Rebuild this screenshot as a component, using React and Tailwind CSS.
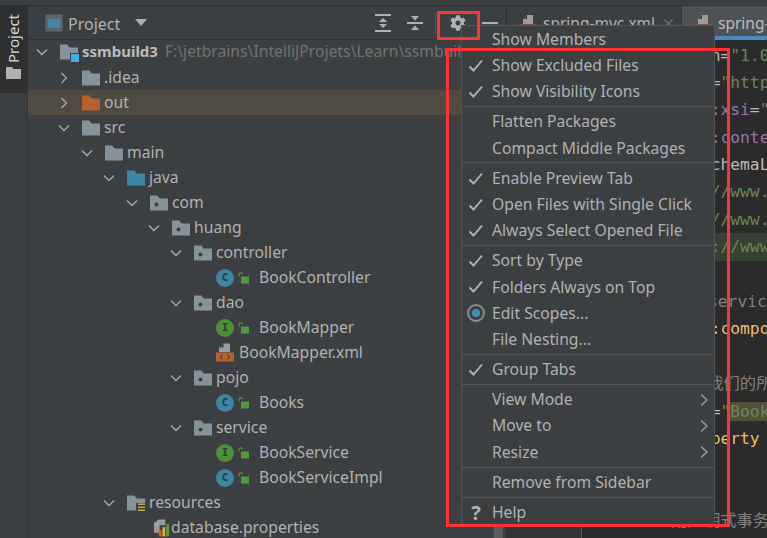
import React from "react";
import { FaCog } from "react-icons/fa";

const SANS = "font-['Noto_Sans','Open_Sans',sans-serif]";

const Chevron = ({ open, className = "" }) => (
  <svg width="16" height="16" viewBox="0 0 16 16" className={className} fill="none" stroke="#a9abad" strokeWidth="1.3">
    {open ? <path d="M3 5.5l5 5 5-5" /> : <path d="M5.5 3l5 5-5 5" />}
  </svg>
);

const Folder = ({ color = "#87939a", dot, stripes }) => (
  <svg width="18" height="16" viewBox="0 0 18 16" className="shrink-0">
    <path d="M0 1h7.5l2 3H18v12H0z" transform="translate(0 -.5)" fill={color} />
    {dot && <circle cx="6.5" cy="9.5" r="2" fill="#3c3f41" />}
    {stripes && (
      <g>
        <rect x="9" y="8" width="9" height="8" fill="#3c3f41" />
        <rect x="11" y="8.5" width="8" height="1.5" fill="#c9a24a" />
        <rect x="11" y="11.5" width="8" height="1.5" fill="#c9a24a" />
        <rect x="11" y="14.5" width="8" height="1.5" fill="#c9a24a" />
      </g>
    )}
  </svg>
);

const ModuleIcon = () => (
  <span className="relative w-[18px] h-4 shrink-0">
    <Folder />
    <span className="absolute left-[11px] top-[10px] w-2 h-2 bg-[#3fb1e5] outline outline-1 outline-[#3c3f41]" />
  </span>
);

const Lock = () => (
  <svg width="11" height="12" viewBox="0 0 11 12" className="shrink-0">
    <path d="M1 4.5V2.6C1 1.4 1.9.8 2.8.8s1.6.6 1.9 1.5" fill="none" stroke="#4f9a3c" strokeWidth="1.2" />
    <rect x="3" y="4.5" width="8" height="7" fill="#4f9a3c" />
  </svg>
);

const ClassIcon = ({ kind }) => (
  <span className="flex items-center gap-1 shrink-0">
    <span
      className={
        "w-[18px] h-[18px] rounded-full flex items-center justify-center text-[11px] font-bold leading-none text-[#2f3a3e] font-['DejaVu_Sans_Mono',monospace] " +
        (kind === "I" ? "bg-[#4f8f38]" : "bg-[#3d84a5]")
      }
    >
      {kind}
    </span>
    <Lock />
  </span>
);

const XmlIcon = () => (
  <svg width="18" height="19" viewBox="0 0 18 19" className="shrink-0">
    <path d="M3 9V4.5L7.5 0.5H14V9z" fill="#9a9da0" />
    <path d="M3 4.5H7.5V0.5z" fill="#3c3f41" />
    <rect x="0" y="9.5" width="18" height="9" fill="#b8602c" />
    <path d="M6.5 11.5L4.5 14l2 2.5M11.5 11.5l2 2.5-2 2.5" stroke="#3c3f41" strokeWidth="1.2" fill="none" />
  </svg>
);

const PropIcon = () => (
  <svg width="17" height="19" viewBox="0 0 18 19" className="shrink-0">
    <path d="M1 15V5l5-4h7v6H7v8z" fill="#9a9da0" />
    <rect x="6" y="12" width="3" height="7" fill="#d9622b" />
    <rect x="10" y="9" width="3" height="10" fill="#e0a93b" />
    <rect x="14" y="6" width="3" height="13" fill="#5c9c3c" />
  </svg>
);

const TabXml = () => (
  <svg width="16" height="11" viewBox="0 0 16 11" className="shrink-0">
    <path d="M3 9V4L7 0h6v9z" fill="#9a9da0" />
    <path d="M3 4h4V0z" fill="#3c3f41" />
    <rect x="0" y="9.5" width="16" height="1.5" fill="#b8602c" />
  </svg>
);

const rows = [
  { d: 0, open: true, icon: <ModuleIcon />, label: "ssmbuild3", bold: true, path: "F:\\jetbrains\\IntelliJProjets\\Learn\\ssmbuild3" },
  { d: 1, open: false, icon: <Folder />, label: ".idea" },
  { d: 1, open: false, icon: <Folder color="#b85f2d" />, label: "out", hi: true },
  { d: 1, open: true, icon: <Folder />, label: "src" },
  { d: 2, open: true, icon: <Folder />, label: "main" },
  { d: 3, open: true, icon: <Folder color="#3d87a5" />, label: "java" },
  { d: 4, open: true, icon: <Folder dot />, label: "com" },
  { d: 5, open: true, icon: <Folder dot />, label: "huang" },
  { d: 6, open: true, icon: <Folder dot />, label: "controller" },
  { d: 7, icon: <ClassIcon kind="C" />, label: "BookController", gap: "ml-[10px]" },
  { d: 6, open: true, icon: <Folder dot />, label: "dao" },
  { d: 7, icon: <ClassIcon kind="I" />, label: "BookMapper", gap: "ml-[10px]" },
  { d: 7, icon: <XmlIcon />, label: "BookMapper.xml", gap: "ml-[5px]" },
  { d: 6, open: true, icon: <Folder dot />, label: "pojo" },
  { d: 7, icon: <ClassIcon kind="C" />, label: "Books", gap: "ml-[10px]" },
  { d: 6, open: true, icon: <Folder dot />, label: "service" },
  { d: 7, icon: <ClassIcon kind="I" />, label: "BookService", gap: "ml-[10px]" },
  { d: 7, icon: <ClassIcon kind="C" />, label: "BookServiceImpl", gap: "ml-[10px]" },
  { d: 3, open: true, icon: <Folder stripes />, label: "resources" },
  { d: 4, icon: <PropIcon />, label: "database.properties", gap: "ml-[1px]", shift: "ml-[13px]" },
];

const depthPad = ["pl-[6px]", "pl-[28px]", "pl-[51px]", "pl-[73px]", "pl-[96px]", "pl-[118px]", "pl-[140px]", "pl-[162px]"];

const TreeRow = ({ r }) => (
  <div className={"h-[25px] flex items-center whitespace-nowrap shrink-0 " + depthPad[r.d] + (r.hi ? " bg-[#4f4b41]" : "") + (r.bold ? " pb-[2px]" : "")}>
    {r.open === undefined ? (
      <span className="w-4 shrink-0" />
    ) : (
      <Chevron open={r.open} className="shrink-0" />
    )}
    <span className={"flex items-center " + (r.shift || "ml-[10px]")}>{r.icon}</span>
    <span className={(r.gap || "ml-[4px]") + (r.bold ? " font-bold text-[15px] text-[#bbbbbb]" : " text-[#afb1b3]")}>{r.label}</span>
    {r.path && <span className="ml-[7px] text-[#6f7173]">{r.path}</span>}
  </div>
);

const Check = () => (
  <svg width="16" height="16" viewBox="0 0 16 16" fill="none" stroke="#afb1b3" strokeWidth="1.9">
    <path d="M1.5 8.5l4 4L14 2.5" />
  </svg>
);

const MenuRow = ({ mark, label, sub }) => (
  <div className="h-[26.2px] flex items-center whitespace-nowrap text-[#afb1b3] relative">
    <span className="w-[30px] flex justify-center pr-[2px] shrink-0">
      {mark === "check" && <Check />}
      {mark === "radio" && (
        <span className="w-[18px] h-[18px] rounded-full bg-[#3c3f41] border-[2.5px] border-[#8a8d90] flex items-center justify-center">
          <span className="w-2 h-2 rounded-full bg-[#3f8fb8]" />
        </span>
      )}
      {mark === "help" && <span className="text-[#afb1b3] text-[20px] font-bold leading-none">?</span>}
    </span>
    <span>{label}</span>
    {sub && (
      <svg width="10" height="14" viewBox="0 0 10 14" className="absolute right-[5px] top-[6px]" fill="none" stroke="#9a9c9e" strokeWidth="1.5">
        <path d="M2 1.5L8 7l-6 5.5" />
      </svg>
    )}
  </div>
);

const Sep = () => (
  <div className="h-1 flex items-start pt-px">
    <div className="h-px w-full bg-[#515355]" />
  </div>
);

const menu = [
  ["", "Show Members"],
  ["check", "Show Excluded Files"],
  ["check", "Show Visibility Icons"],
  null,
  ["", "Flatten Packages"],
  ["", "Compact Middle Packages"],
  null,
  ["check", "Enable Preview Tab"],
  ["check", "Open Files with Single Click"],
  ["check", "Always Select Opened File"],
  null,
  ["check", "Sort by Type"],
  ["check", "Folders Always on Top"],
  ["radio", "Edit Scopes..."],
  ["", "File Nesting..."],
  null,
  ["check", "Group Tabs"],
  null,
  ["", "View Mode", true],
  ["", "Move to", true],
  ["", "Resize", true],
  null,
  ["", "Remove from Sidebar"],
  null,
  ["help", "Help"],
];

const G = "text-[#6a8759]";
const P = "text-[#9876aa]";
const W = "text-[#bababa]";
const Y = "text-[#e8bf6a]";
const C = "text-[#808080]";

const code = [
  <span className={W}>&lt;?xml version=<span className={G}>"1.0" encoding</span></span>,
  <span className={W}><span className={Y}>&lt;beans</span> xmlns=<span className={G}>"http://www</span></span>,
  <span className={W}>       <span className={W}>xmlns</span><span className={P}>:xsi</span>=<span className={G}>"http://www</span></span>,
  <span className={W}>       xmlns<span className={P}>:context</span>=</span>,
  <span className={W}>       xsi:schemaLocation</span>,
  <span className={G}>       http://www.springfr</span>,
  <span className={G}>       http://www.springfr</span>,
  <span className={G}>        http://www.springf</span>,
  <span> </span>,
  <span className={C}>    &lt;!--扫描<span className="ml-[4px]">service下的包</span>--&gt;</span>,
  <span className={Y}>    &lt;context:component-scan</span>,
  <span> </span>,
  <span className={C}>    &lt;!--2 将我们的所有业务类--&gt;</span>,
  <span className={W}>    <span className={Y}>&lt;bean</span> id=<span className={G}>"<span className="bg-[#52503a]">BookServiceImpl</span></span></span>,
  <span className={Y}>        &lt;property name</span>,
  <span> </span>,
  <span> </span>,
  <span className={C}>    &lt;!--用声明式事务配置--&gt;</span>,
  <span className={W}>    <span className={Y}>&lt;bean</span> id=<span className={G}>"<span className="bg-[#52503a]">transaction</span></span></span>,
];

export default function App() {
  return (
    <div className={"w-[767px] h-[538px] overflow-hidden relative bg-[#3c3f41] flex flex-col text-[15.7px] " + SANS}>
      <div className="h-[6px] shrink-0 border-b border-[#323232]" />
      <div className="flex-1 min-h-0 flex">
        {/* tool stripe */}
        <div className="w-[28px] shrink-0 border-r border-[#323232]">
          <div className="h-[87px] bg-[#2d2f30] flex flex-col items-center pt-[8px] gap-[4px]">
            <span className="[writing-mode:vertical-rl] rotate-180 text-[15px] leading-none text-[#d6d6d6]">Project</span>
            <svg width="15" height="12" viewBox="0 0 15 12"><path d="M0 0h6l1.5 2H15v10H0z" fill="#afb1b3" /></svg>
          </div>
        </div>

        {/* project panel */}
        <div className="w-[479px] shrink-0 flex flex-col relative border-r border-[#2b2b2b]">
          <div className="h-[34px] shrink-0 border-b border-[#323232] flex items-center relative">
            <svg width="18" height="18" viewBox="0 0 18 18" className="ml-[17px] shrink-0">
              <rect x=".5" y=".5" width="17" height="17" fill="#5e6568" />
              <rect x="3" y="5" width="12" height="9" fill="#3f87a5" />
            </svg>
            <span className="ml-[5px] mt-[2px] text-[16px] text-[#afb1b3]">Project</span>
            <svg width="12" height="7" viewBox="0 0 12 7" className="ml-[15px] shrink-0"><path d="M0 0h12L6 7z" fill="#afb1b3" /></svg>
            <div className="flex-1" />
            <svg width="16" height="18" viewBox="0 0 16 18" className="shrink-0" fill="#afb1b3">
              <rect x="0" y="0" width="16" height="2" />
              <rect x="0" y="16" width="16" height="2" />
              <path d="M8 4l4 4H4zM8 14l-4-4h8z" />
            </svg>
            <svg width="16" height="14" viewBox="0 0 16 14" className="ml-[16px] shrink-0" fill="#afb1b3">
              <rect x="0" y="6" width="16" height="2" />
              <path d="M4 0h8L8 4.5zM8 9.5l4 4.5H4z" />
            </svg>
            <div className="w-px h-[22px] bg-[#515355] ml-[12px] shrink-0" />
            <FaCog className="ml-[14px] shrink-0 text-[#afb1b3]" size={16} />
            <div className="ml-[16px] mr-[8px] w-4 h-[2px] bg-[#afb1b3] shrink-0" />
          </div>
          <div className="flex-1 min-h-0 flex flex-col overflow-hidden">
            {rows.map((r, i) => (
              <TreeRow key={i} r={r} />
            ))}
          </div>
          <div className="absolute right-[3px] bottom-0 w-[9px] h-[40px] bg-[#5a5c5e]" />
        </div>

        {/* editor */}
        <div className="flex-1 min-w-0 flex flex-col overflow-hidden">
          <div className="h-[34px] shrink-0 flex">
            <div className="w-[175px] shrink-0 flex items-start pt-[9px] pl-[13px] whitespace-nowrap border-r border-[#323232]">
              <TabXml />
              <span className="ml-[7px] text-[15.5px] text-[#afb1b3] leading-[17px]">spring-mvc.xml</span>
              <svg width="9" height="9" viewBox="0 0 9 9" className="ml-[9px] mt-[4px] shrink-0" fill="none" stroke="#6f7173" strokeWidth="1.3">
                <path d="M.5.5l8 8M8.5.5l-8 8" />
              </svg>
            </div>
            <div className="flex-1 bg-[#4e5254] border-b-[4px] border-[#4a88c7] flex items-start pt-[9px] pl-[13px] whitespace-nowrap overflow-hidden">
              <TabXml />
              <span className="ml-[7px] text-[15.5px] text-[#bbbbbb] leading-[17px]">spring-mvc.xml</span>
            </div>
          </div>
          <div className="flex-1 min-h-0 flex bg-[#2b2b2b] overflow-hidden">
            <div className="w-[75px] shrink-0 bg-[#313335] border-r border-[#555555] pr-[50px] pt-[468px] text-right text-[15px] leading-[27.4px] text-[#606366] font-['DejaVu_Sans_Mono',monospace]">
              21
            </div>
            <div className="flex-1 min-w-0 pt-[1.5px] pl-[11px] overflow-hidden font-['DejaVu_Sans_Mono','Noto_Sans_CJK_SC',monospace] text-[16.3px]">
              {code.map((l, i) => (
                <div key={i} className={"h-[27.4px] leading-[27.4px] whitespace-pre -mr-[600px] " + (i === 7 ? "bg-[#344134]" : "")}>
                  {l}
                </div>
              ))}
            </div>
          </div>
        </div>
      </div>

      {/* popup menu */}
      <div className="absolute left-[461px] top-[25px] w-[254px] h-[501px] bg-[#3c3f41] border border-[#515355] pt-[0.5px]">
        {menu.map((m, i) => (m ? <MenuRow key={i} mark={m[0]} label={m[1]} sub={m[2]} /> : <Sep key={i} />))}
      </div>

      {/* annotation boxes */}
      <div className="absolute left-[437px] top-[11px] w-[43px] h-[29px] border-[3px] border-[#ff3333]" />
      <div className="absolute left-[446px] top-[48px] w-[284px] h-[479px] border-[3px] border-[#ff3333]" />
    </div>
  );
}
